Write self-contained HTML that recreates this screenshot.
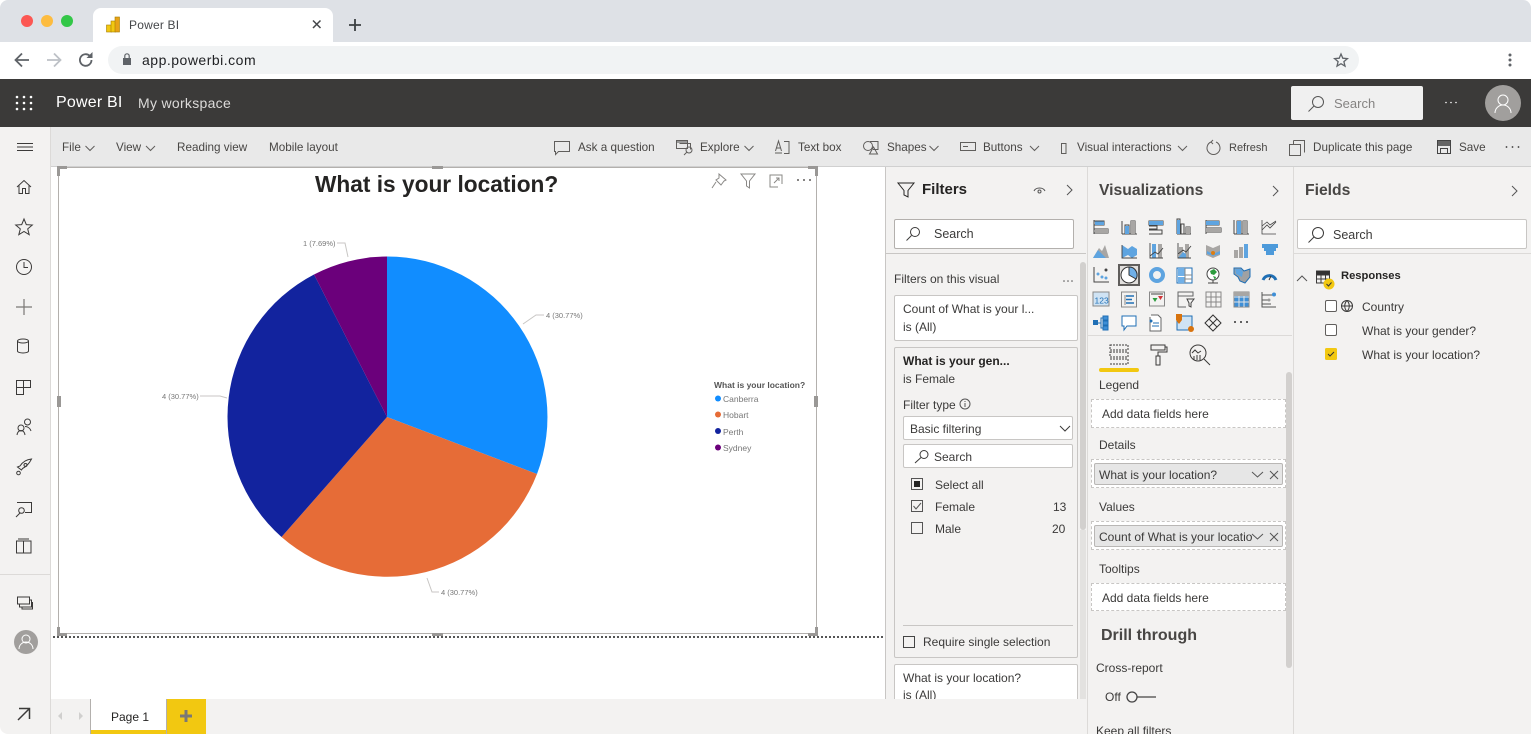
<!DOCTYPE html>
<html><head><meta charset="utf-8"><title>Power BI</title>
<style>
html,body{margin:0;padding:0;width:1531px;height:734px;overflow:hidden;background:#fff}
body{position:relative;font-family:"Liberation Sans",sans-serif;color:#333}
.b{position:absolute}
.t{position:absolute;white-space:nowrap;line-height:16px;font-size:12px;color:#3b3a39}
.r{font-size:11.7px;color:#484644}
svg.o{position:absolute;left:0;top:0}
.inp{position:absolute;background:#fff;border:1px solid #b3b0ad;border-radius:2px;box-sizing:border-box}
.dash{position:absolute;background:#fff;border:1px dashed #c8c6c4;box-sizing:border-box}
.pill{position:absolute;background:#e6e6e6;border:1px solid #b9b7b5;border-radius:2px;box-sizing:border-box}
</style></head><body>
<!-- browser chrome -->
<div class="b" style="left:0;top:0;width:1531px;height:42px;background:#dee1e6;border-radius:8px 8px 0 0"></div>
<div class="b" style="left:93px;top:8px;width:240px;height:34px;background:#fff;border-radius:8px 8px 0 0"></div>
<div class="b" style="left:0;top:42px;width:1531px;height:37px;background:#fff"></div>
<div class="b" style="left:108px;top:46px;width:1251px;height:28px;background:#f1f3f4;border-radius:14px"></div>
<div class="t" style="left:129px;top:17px;color:#45474a;letter-spacing:.2px">Power BI</div>
<div class="t" style="left:142px;top:52px;font-size:14px;color:#202124;letter-spacing:.5px">app.powerbi.com</div>
<!-- header -->
<div class="b" style="left:0;top:79px;width:1531px;height:48px;background:#3b3a39"></div>
<div class="t" style="left:56px;top:95px;font-size:16px;color:#fff;letter-spacing:.2px">Power BI</div>
<div class="t" style="left:138px;top:95px;font-size:14px;color:#dcdbda;letter-spacing:.3px">My workspace</div>
<div class="b" style="left:1291px;top:86px;width:132px;height:34px;background:#f0f0f0;border-radius:2px"></div>
<div class="t" style="left:1334px;top:96px;font-size:13px;color:#858382">Search</div>
<div class="b" style="left:1485px;top:85px;width:36px;height:36px;background:#a19f9d;border-radius:50%"></div>
<!-- app -->
<div class="b" style="left:0;top:127px;width:51px;height:607px;background:#f3f2f1;border-right:1px solid #dcdad8;box-sizing:border-box;border-radius:0 0 0 8px"></div>
<div class="b" style="left:51px;top:127px;width:1480px;height:40px;background:#e9e9e9;border-bottom:1px solid #d0d0d0;box-sizing:border-box"></div>
<div class="b" style="left:0;top:574px;width:50px;height:1px;background:#dcdad8"></div>
<div class="t r" style="left:62px;top:140px">File</div>
<div class="t r" style="left:116px;top:140px">View</div>
<div class="t r" style="left:177px;top:140px">Reading view</div>
<div class="t r" style="left:269px;top:140px">Mobile layout</div>
<div class="t r" style="left:578px;top:140px">Ask a question</div>
<div class="t r" style="left:700px;top:140px">Explore</div>
<div class="t r" style="left:798px;top:140px">Text box</div>
<div class="t r" style="left:887px;top:140px">Shapes</div>
<div class="t r" style="left:983px;top:140px">Buttons</div>
<div class="t r" style="left:1077px;top:140px">Visual interactions</div>
<div class="t r" style="left:1229px;top:140px;font-size:11px">Refresh</div>
<div class="t r" style="left:1313px;top:140px">Duplicate this page</div>
<div class="t r" style="left:1459px;top:140px">Save</div>
<!-- visual -->
<div class="b" style="left:58px;top:167px;width:759px;height:467px;border:1px solid #b3b0ad;box-sizing:border-box"></div>
<div class="b" style="left:53px;top:636px;width:831px;height:2px;background:repeating-linear-gradient(90deg,#555 0 2px,transparent 2px 4px)"></div>
<div class="t" style="left:315px;top:170px;font-size:22.7px;line-height:28px;font-weight:bold;color:#252423">What is your location?</div>
<div class="t" style="left:303px;top:236px;font-size:7.5px;color:#777">1 (7.69%)</div>
<div class="t" style="left:546px;top:308px;font-size:7.5px;color:#777">4 (30.77%)</div>
<div class="t" style="left:162px;top:389px;font-size:7.5px;color:#777">4 (30.77%)</div>
<div class="t" style="left:441px;top:585px;font-size:7.5px;color:#777">4 (30.77%)</div>
<div class="t" style="left:714px;top:377px;font-size:8.5px;font-weight:bold;color:#555">What is your location?</div>
<div class="t" style="left:723px;top:391px;font-size:8.5px;color:#777">Canberra</div>
<div class="t" style="left:723px;top:407px;font-size:8.5px;color:#777">Hobart</div>
<div class="t" style="left:723px;top:424px;font-size:8.5px;color:#777">Perth</div>
<div class="t" style="left:723px;top:440px;font-size:8.5px;color:#777">Sydney</div>
<!-- filters pane -->
<div class="b" style="left:885px;top:167px;width:202px;height:567px;background:#f3f2f1;border-left:1px solid #c8c6c4;box-sizing:border-box"></div>
<div class="t" style="left:922px;top:181px;font-size:15px;font-weight:bold;color:#252423;top:181px;line-height:17px">Filters</div>
<div class="inp" style="left:894px;top:219px;width:180px;height:30px"></div>
<div class="t" style="left:934px;top:226px;font-size:12.5px">Search</div>
<div class="b" style="left:886px;top:253px;width:200px;height:1px;background:#c8c6c4"></div>
<div class="t" style="left:894px;top:271px;font-size:12px">Filters on this visual</div>
<div class="inp" style="left:894px;top:295px;width:184px;height:46px;border-color:#c8c6c4"></div>
<div class="t" style="left:903px;top:301px">Count of What is your l...</div>
<div class="t" style="left:903px;top:319px">is (All)</div>
<div class="b" style="left:894px;top:347px;width:184px;height:311px;background:#f3f2f1;border:1px solid #c8c6c4;border-radius:2px;box-sizing:border-box"></div>
<div class="t" style="left:903px;top:353px;font-weight:bold;color:#252423">What is your gen...</div>
<div class="t" style="left:903px;top:371px">is Female</div>
<div class="t" style="left:903px;top:397px">Filter type</div>
<div class="inp" style="left:903px;top:416px;width:170px;height:24px;border-color:#c8c6c4"></div>
<div class="t" style="left:910px;top:421px">Basic filtering</div>
<div class="inp" style="left:903px;top:444px;width:170px;height:24px;border-color:#c8c6c4"></div>
<div class="t" style="left:934px;top:449px">Search</div>
<div class="t" style="left:935px;top:477px">Select all</div>
<div class="t" style="left:935px;top:499px">Female</div>
<div class="t" style="left:935px;top:521px">Male</div>
<div class="t" style="left:1053px;top:499px">13</div>
<div class="t" style="left:1052px;top:521px">20</div>
<div class="b" style="left:903px;top:625px;width:170px;height:1px;background:#c8c6c4"></div>
<div class="t" style="left:923px;top:634px">Require single selection</div>
<div class="inp" style="left:894px;top:664px;width:184px;height:50px;border-color:#c8c6c4"></div>
<div class="t" style="left:903px;top:670px">What is your location?</div>
<div class="t" style="left:903px;top:687px">is (All)</div>
<div class="b" style="left:1080px;top:262px;width:6px;height:268px;background:#d2d0ce;border-radius:3px"></div>
<div class="b" style="left:1080px;top:530px;width:6px;height:169px;background:#e3e2e0"></div>
<!-- page bottom tabs -->
<div class="b" style="left:51px;top:699px;width:1036px;height:35px;background:#f3f2f1"></div>
<div class="b" style="left:90px;top:699px;width:77px;height:35px;background:#fff;border-left:1px solid #b3b0ad;border-right:1px solid #b3b0ad;box-sizing:border-box"></div>
<div class="b" style="left:91px;top:730px;width:75px;height:4px;background:#f2c811"></div>
<div class="b" style="left:167px;top:699px;width:39px;height:35px;background:#f2c811"></div>
<div class="t" style="left:111px;top:709px;color:#252423;font-size:12px">Page 1</div>
<!-- viz pane -->
<div class="b" style="left:1087px;top:167px;width:206px;height:567px;background:#f3f2f1;border-left:1px solid #dcdad8;box-sizing:border-box"></div>
<div class="t" style="left:1099px;top:183px;font-size:15.7px;font-weight:bold;color:#484644;top:183px">Visualizations</div>
<div class="b" style="left:1088px;top:335px;width:204px;height:1px;background:#dcdad8"></div>
<div class="b" style="left:1099px;top:368px;width:40px;height:4px;background:#f2c811;border-radius:2px"></div>
<div class="b" style="left:1286px;top:372px;width:6px;height:296px;background:#d2d0ce;border-radius:3px"></div>
<div class="t" style="left:1099px;top:377px">Legend</div>
<div class="dash" style="left:1091px;top:399px;width:195px;height:29px"></div>
<div class="t" style="left:1102px;top:406px">Add data fields here</div>
<div class="t" style="left:1099px;top:437px">Details</div>
<div class="dash" style="left:1091px;top:459px;width:195px;height:29px"></div>
<div class="pill" style="left:1094px;top:463px;width:189px;height:22px"></div>
<div class="t" style="left:1099px;top:467px">What is your location?</div>
<div class="t" style="left:1099px;top:499px">Values</div>
<div class="dash" style="left:1091px;top:521px;width:195px;height:29px"></div>
<div class="pill" style="left:1094px;top:525px;width:189px;height:22px"></div>
<div class="t" style="left:1099px;top:529px;width:153px;overflow:hidden">Count of What is your location</div>
<div class="t" style="left:1099px;top:561px">Tooltips</div>
<div class="dash" style="left:1091px;top:583px;width:195px;height:28px"></div>
<div class="t" style="left:1102px;top:590px">Add data fields here</div>
<div class="t" style="left:1101px;top:627px;font-size:16px;line-height:18px;font-weight:bold;color:#484644">Drill through</div>
<div class="t" style="left:1096px;top:660px">Cross-report</div>
<div class="t" style="left:1105px;top:689px">Off</div>
<div class="t" style="left:1096px;top:723px">Keep all filters</div>
<!-- fields pane -->
<div class="b" style="left:1293px;top:167px;width:238px;height:567px;background:#f3f2f1;border-left:1px solid #dcdad8;box-sizing:border-box"></div>
<div class="t" style="left:1305px;top:183px;font-size:15.7px;font-weight:bold;color:#484644">Fields</div>
<div class="inp" style="left:1297px;top:219px;width:230px;height:30px;border-color:#c8c6c4"></div>
<div class="t" style="left:1333px;top:227px;font-size:12.5px">Search</div>
<div class="b" style="left:1294px;top:253px;width:237px;height:1px;background:#dcdad8"></div>
<div class="t" style="left:1341px;top:268px;font-weight:bold;font-size:11.2px;color:#252423">Responses</div>
<div class="t" style="left:1362px;top:299px">Country</div>
<div class="t" style="left:1362px;top:323px">What is your gender?</div>
<div class="t" style="left:1362px;top:347px">What is your location?</div>

<svg class="o" width="1531" height="734" viewBox="0 0 1531 734" fill="none" stroke="#3b3a39" stroke-width="1">
<!-- traffic lights -->
<g stroke="none"><circle cx="27" cy="21" r="6" fill="#fc5753"/><circle cx="47" cy="21" r="6" fill="#fdbc40"/><circle cx="67" cy="21" r="6" fill="#33c748"/></g>
<!-- PBI logo -->
<g stroke="#a67c00" stroke-width=".6"><rect x="106.500" y="25" width="5" height="7" fill="#f2c811"/><rect x="111" y="21" width="4.500" height="11" fill="#f2c811"/><rect x="115" y="17" width="4.500" height="15" fill="#e8a317"/></g>
<path d="M313 20.500l7.500 7.500M320.500 20.500l-7.500 7.500" stroke="#45474a" stroke-width="1.500"/>
<path d="M349 25h12M355 19v12" stroke="#3c4043" stroke-width="1.800"/>
<!-- nav -->
<path d="M29 60H16M22 53.500l-6.500 6.500 6.500 6.500" stroke="#5f6368" stroke-width="1.800"/>
<path d="M47 60h13M54 53.500l6.500 6.500-6.500 6.500" stroke="#bdc1c6" stroke-width="1.800"/>
<path d="M91.500 60a5.800 5.800 0 1 1-1.700-4.100" stroke="#5f6368" stroke-width="1.800"/><path d="M92.500 52v6h-6z" fill="#5f6368" stroke="none"/>
<path d="M123 58h8v7h-8z" fill="#5f6368" stroke="none"/><path d="M124.800 58v-2a2.200 2.200 0 0 1 4.400 0v2" stroke="#5f6368" stroke-width="1.200"/>
<path d="M1341 54l1.800 4.200 4.600.4-3.500 3 1.100 4.500-4-2.400-4 2.400 1.100-4.500-3.500-3 4.600-.4z" stroke="#5f6368" stroke-width="1.300"/>
<g fill="#5f6368" stroke="none"><circle cx="1510" cy="55" r="1.500"/><circle cx="1510" cy="60" r="1.500"/><circle cx="1510" cy="65" r="1.500"/></g>
<!-- waffle -->
<g fill="#fff" stroke="none"><circle cx="17" cy="97" r="1.300"/><circle cx="24" cy="97" r="1.300"/><circle cx="31" cy="97" r="1.300"/><circle cx="17" cy="103" r="1.300"/><circle cx="24" cy="103" r="1.300"/><circle cx="31" cy="103" r="1.300"/><circle cx="17" cy="109" r="1.300"/><circle cx="24" cy="109" r="1.300"/><circle cx="31" cy="109" r="1.300"/>
<circle cx="1446" cy="102.500" r=".8"/><circle cx="1451" cy="102.500" r=".8"/><circle cx="1456" cy="102.500" r=".8"/></g>
<circle cx="1318" cy="102" r="5.500" stroke="#555"/><path d="M1314 106l-5.500 5.500" stroke="#555"/>
<circle cx="1503" cy="100" r="5" stroke="#fff"/><path d="M1495 113a8 8 0 0 1 16 0" stroke="#fff"/>
<!-- left nav -->
<path d="M17 143.500h16M17 147h16M17 150.500h16" stroke-width="1"/>
<path d="M17 187l7-6.500 7 6.500M19 185.500v8h3.500v-5h3v5h3.500v-8"/>
<path d="M24 219l2.300 5.600 6 .4-4.600 3.900 1.500 5.800-5.200-3.200-5.200 3.200 1.500-5.800-4.600-3.900 6-.4z"/>
<circle cx="24" cy="267" r="7.500"/><path d="M24 262v5.500h4"/>
<path d="M16 307h16M24 299v16" stroke="#7a7876" stroke-width="1.200"/>
<ellipse cx="23" cy="341" rx="5.500" ry="2"/><path d="M17.500 341v10c0 1.200 2.500 2 5.500 2s5.500-.8 5.500-2v-10"/>
<path d="M16.500 387.500v-7h7v7zM23.500 380.500h7v7h-7zM16.500 387.500h7v7h-7z" stroke-width="1"/>
<circle cx="21" cy="428" r="3"/><circle cx="27.500" cy="422" r="3"/><path d="M17 435c.5-3 2-4.500 4-4.500s3.500 1.500 4 4.500M25 426.500c2.500 0 5 1.500 6 4.500"/>
<path d="M31.500 459c-5 .5-9 3-11.500 7l-2.500 1 4 3 1-1.500c4-2 7-5.500 9-9.500z"/><circle cx="25.500" cy="465" r="1.500"/><circle cx="18.500" cy="473" r="1.800"/>
<path d="M17 502.500h14.500v10H25M16 517l4-4"/><circle cx="21.500" cy="510.500" r="2.800"/>
<path d="M16.500 541h7v12h-7zM23.500 541h7.500v12h-7.500zM18 539h11" />
<path d="M17.500 597h12v7h-12zM19.500 604v3h12v-7h-2M22 607v2h10.500v-7" />
<circle cx="26" cy="642" r="12" fill="#a19f9d" stroke="none"/><circle cx="26" cy="639" r="4" stroke="#fff"/><path d="M19 649a7 7 0 0 1 14 0" stroke="#fff"/>
<path d="M18 720l11-11M19 708.500h10.500V719" stroke-width="1.500"/>
<!-- ribbon chevrons -->
<g stroke="#605e5c"><path d="M85.500 146l4.500 4.500 4.500-4.500M146 146l4.500 4.500 4.500-4.500M744.500 146l4.500 4.500 4.500-4.500M929.500 146l4.500 4.500 4.500-4.500M1030 146l4.500 4.500 4.500-4.500M1178 146l4.500 4.500 4.500-4.500"/></g>
<!-- ribbon icons -->
<g stroke="#605e5c">
<path d="M554.500 141.500h15v10h-11l-3 3v-3h-1z"/>
<path d="M676.500 140.500h11v8h-11zM679.500 143.500h11v6" /><rect x="677" y="141" width="10" height="2" fill="#999" stroke="none"/><circle cx="689" cy="150" r="3"/><path d="M687 152l-3 3"/>
<path d="M775.500 151l3-10 3 10M776.500 148h4.500M775 153h7M784 141.500h5v12h-5"/>
<circle cx="868" cy="146" r="4.500"/><path d="M870 141.500h8v8h-5M873.500 147l4 7h-8z"/>
<path d="M960.500 142.500h15v8h-15zM963 146.500h5"/>
<path d="M1061.500 143.500h4.500v10h-4.500z"/>
<path d="M1211 142a6.500 6.500 0 1 0 5 0M1213 140l-2 2 2 2"/>
<path d="M1293.500 140.500h11v12M1289.500 144.500h11v11h-11zM1293.500 144.500v-4"/>
<path d="M1437.500 140.500h13v13h-13z" stroke="#444"/><rect x="1438" y="141" width="12" height="5" fill="#666" stroke="none"/><path d="M1440.500 153.500v-5h7v5" stroke="#444"/>
</g>
<g fill="#3b3a39" stroke="none"><circle cx="1506.500" cy="147" r=".9"/><circle cx="1512.500" cy="147" r=".9"/><circle cx="1518.500" cy="147" r=".9"/></g>
<!-- handles -->
<g fill="#9a9896" stroke="none">
<path d="M57 166h10v3h-7v7h-3zM808 166h10v10h-3v-7h-7zM57 627h3v6h7v3H57zM815 627h3v9h-10v-3h7z"/>
<rect x="432" y="166" width="11" height="3"/><rect x="432" y="633" width="11" height="3"/><rect x="57" y="396" width="4" height="11"/><rect x="814" y="396" width="4" height="11"/></g>
<!-- visual header icons -->
<path d="M719 174l7 6-2 1-3 4-5-5 3-2zM716 182l-4 6" stroke="#8a8886"/>
<path d="M741 174h14l-5.500 7v7l-3-2v-5z" stroke="#8a8886"/>
<path d="M775 175h7v9M770 179v8h8M774 183l5-5M776 178h3v3M770 179v-4h5" stroke="#8a8886"/>
<g fill="#605e5c" stroke="none"><circle cx="798" cy="180" r="1"/><circle cx="804" cy="180" r="1"/><circle cx="810" cy="180" r="1"/></g>
<!-- pie -->
<g stroke="none">
<path d="M387 417V256.500A160.500 160.500 0 0 1 537 474z" fill="#118dff"/>
<path d="M387 417L537 474A160.500 160.500 0 0 1 281.500 537z" fill="#e66c37"/>
<path d="M387 417L281.500 537A160.500 160.500 0 0 1 314 274.500z" fill="#12239e"/>
<path d="M387 417L314 274.500A160.500 160.500 0 0 1 387 256.500z" fill="#6b007b"/>
</g>
<g stroke="#c8c6c4"><path d="M337 243h8l3 14M544 315h-8l-13 9M200 396h20l7 2M439 592h-7l-5-14"/></g>
<g stroke="none"><circle cx="718" cy="398.500" r="3" fill="#118dff"/><circle cx="718" cy="414.500" r="3" fill="#e66c37"/><circle cx="718" cy="431" r="3" fill="#12239e"/><circle cx="718" cy="447.500" r="3" fill="#6b007b"/></g>
<!-- tabs -->
<path d="M62 712l-4 4 4 4zM79 712l4 4-4 4z" fill="#d0cfce" stroke="none"/>
<path d="M186 710v12M180 716h12" stroke="#7a7876" stroke-width="3"/>
<!-- filters pane icons -->
<path d="M898 183h16l-6 7.500V197l-4-2v-4.500z" stroke="#252423"/>
<path d="M1034 191c2-4 9-4 11 0" stroke="#555"/><circle cx="1039.500" cy="191.500" r="1.500" stroke="#555"/>
<path d="M1067 185l5 5-5 5" stroke="#555"/>
<circle cx="915" cy="232" r="4.500"/><path d="M911.500 235.500l-5 5"/>
<g fill="#555" stroke="none"><circle cx="1064" cy="281" r=".8"/><circle cx="1068" cy="281" r=".8"/><circle cx="1072" cy="281" r=".8"/></g>
<circle cx="965" cy="404" r="5" stroke="#555"/><path d="M965 403v4M965 401v1" stroke="#555"/>
<path d="M1060 426l5 5 5-5"/>
<circle cx="924" cy="454.500" r="4"/><path d="M921 457.500l-6 5.500"/>
<rect x="911.500" y="478.500" width="11" height="11" stroke="#555"/><rect x="914" y="481" width="6" height="6" fill="#252423" stroke="none"/>
<rect x="911.500" y="500.500" width="11" height="11" stroke="#555"/><path d="M913.500 506l2.500 3 5-6" stroke="#555"/>
<rect x="911.500" y="522.500" width="11" height="11" stroke="#555"/>
<rect x="903.500" y="636.500" width="11" height="11" stroke="#444"/>
<!-- pane chevrons -->
<path d="M1273 186l5 5-5 5M1512 186l5 5-5 5" stroke="#555"/>
<!-- viz icons row 1 -->
<g stroke="#444">
<path d="M1094 220v14M1094 221h10v4h-10M1094 229h14v4h-14"/>
<path d="M1122 234V221M1122 234h15M1125 234v-9h4v9M1131 234v-13h4v13"/>
<path d="M1149 221h14v4h-14zM1149 226h8v3h-8M1149 230h13v4h-13"/>
<path d="M1177 234v-15h3v15M1181 234v-10h3v10M1186 234v-7h4v7M1177 234h14"/>
<path d="M1206 220v14M1206 221h13v4h-13M1206 228h15v4h-15"/>
<path d="M1234 234V220M1234 234h15M1237 234v-13h4v13M1243 234v-13h4v13"/>
<path d="M1262 220v14h14M1262 230l5-5 3 3 6-6M1262 226l5-4 3 3 6-4" stroke-width=".8"/>
</g>
<g fill="#5ea4e0" stroke="none"><rect x="1095" y="221.500" width="9" height="3.500"/><rect x="1125" y="226" width="4" height="8"/><rect x="1149" y="221" width="14" height="4"/><rect x="1177" y="220" width="3" height="14"/><rect x="1206" y="221" width="13" height="4"/><rect x="1237" y="221" width="4" height="13"/></g>
<g fill="#a8a6a4" stroke="none"><rect x="1095" y="229" width="13" height="4"/><rect x="1131" y="221" width="4" height="13"/><rect x="1186" y="227" width="4" height="7"/><rect x="1206" y="228" width="15" height="4"/><rect x="1243" y="221" width="4" height="13"/></g>
<!-- row 2 -->
<g stroke="none"><path d="M1093 258l6-10 3 3 3-6 4 13z" fill="#a8a6a4"/><path d="M1093 258l5-8 4 4 4 4z" fill="#5ea4e0"/>
<path d="M1122 245l6 4 4-3 5 3v6l-5 3-4-3-6 3z" fill="#5ea4e0"/>
<rect x="1152" y="244" width="4" height="14" fill="#5ea4e0"/><rect x="1158" y="244" width="4" height="14" fill="#a8a6a4"/>
<rect x="1179" y="247" width="4" height="11" fill="#a8a6a4"/><rect x="1185" y="244" width="4" height="14" fill="#a8a6a4"/><path d="M1178 258l5-6 3 2v4z" fill="#5ea4e0"/>
<path d="M1206 245l7 3 7-3v10l-7 3-7-3z" fill="#a8a6a4"/><path d="M1207 251l6 3 7-3v3l-7 2-6-2z" fill="#5ea4e0"/><circle cx="1213" cy="253" r="2" fill="#dc7d13"/>
<rect x="1234" y="250" width="4" height="8" fill="#a8a6a4"/><rect x="1239" y="247" width="4" height="11" fill="#a8a6a4"/><rect x="1244" y="244" width="4" height="14" fill="#5ea4e0"/>
<path d="M1262 244h16v4h-2v3h-2v4h-8v-4h-2v-3h-2z" fill="#4d9ada"/></g>
<g stroke="#444"><path d="M1122 245v13h15M1150 243v15h13M1150 256l5-4 3 2 5-6M1178 243v15h13M1178 254l5-4 3 2 5-6" stroke-width=".9"/></g>
<!-- row 3 -->
<path d="M1094 267v15h15" stroke="#444"/>
<g stroke="none"><circle cx="1098" cy="274" r="1.500" fill="#5ea4e0"/><circle cx="1102" cy="277" r="1.500" fill="#5ea4e0"/><circle cx="1106" cy="270" r="1.500" fill="#444"/><circle cx="1106" cy="278" r="1.500" fill="#5ea4e0"/></g>
<rect x="1119" y="265" width="20" height="20" fill="#e1dfdd" stroke="#605e5c" stroke-width="2"/>
<circle cx="1129" cy="275" r="8" fill="#fff" stroke="#333"/><path d="M1129 267a8 8 0 0 1 7 12l-7-4z" fill="#70b0e8" stroke="#333"/>
<circle cx="1157" cy="275" r="6" stroke="#5ea4e0" stroke-width="4"/>
<rect x="1177" y="268" width="15" height="15" stroke="#1f6fb5" fill="#fff"/><path d="M1178 268h7v8h-7zM1178 277h7v6h-7z" fill="#70b0e8" stroke="none"/><path d="M1185 268v15M1185 275h7M1185 279h7" stroke="#888"/>
<circle cx="1213" cy="274" r="6" stroke="#444" fill="#fff"/><path d="M1210 271l4-2 3 3-3 3-3-1zM1213 276l3 1-1 3z" fill="#2c9c3d" stroke="none"/><path d="M1208 283h10M1213 280v3" stroke="#444"/>
<path d="M1234 268h7l3 3 6-2 0 8-5 6-5-2-2-4-4-3z" fill="#9fa1a3" stroke="#1f6fb5"/><path d="M1235 269h6l2 3-1 5-6-3z" fill="#5ea4e0" stroke="none"/>
<path d="M1263 280a7 7 0 0 1 13 0" stroke="#1f6fb5" stroke-width="3"/><path d="M1269 280l2-4" stroke="#333"/>
<!-- row 4 -->
<rect x="1093" y="292" width="16" height="14" fill="#cfe3f4" stroke="#888"/>
<text x="1094.500" y="303.500" font-size="8.500" fill="#1f6fb5" stroke="none" font-family="Liberation Sans">123</text>
<rect x="1121.500" y="292" width="15" height="15" stroke="#888"/><path d="M1125 295v10" stroke="#888"/><path d="M1126 296h8M1126 299.500h6M1126 303h8" stroke="#1f6fb5" stroke-width="1.500"/>
<rect x="1149.500" y="292" width="15" height="14" stroke="#888"/><path d="M1151 294h12" stroke="#444"/><path d="M1155 302l-2.500-4h5z" fill="#2c9c3d" stroke="none"/><path d="M1158 296h5l-2.500 4z" fill="#d13438" stroke="none"/>
<path d="M1178 292h15v4h-15zM1178 296v11h8" stroke="#666"/><path d="M1187 299h7l-3 4v4l-2-1v-3z" stroke="#444"/>
<path d="M1206 292h15v15h-15zM1206 297h15M1206 302h15M1211 292v15M1216 292v15" stroke="#888"/>
<rect x="1234" y="292" width="15" height="15" fill="#3f8fd6" stroke="#888"/><path d="M1234 297h15M1234 302h15M1239 292v15M1244 292v15" stroke="#e5e5e5"/><rect x="1234" y="292" width="15" height="4" fill="#a8a6a4" stroke="none"/>
<path d="M1262 292v15h14M1262 295h12M1262 300h6M1262 304h9" stroke="#555"/><circle cx="1274" cy="294.500" r="2" fill="#3f8fd6" stroke="none"/><circle cx="1269" cy="300" r="1.500" fill="#999" stroke="none"/>
<!-- row 5 -->
<path d="M1097 323h4M1101 323v-5h3M1101 323v5h3" stroke="#1f6fb5"/><rect x="1093" y="320" width="5" height="5" fill="#1f6fb5" stroke="none"/><path d="M1103 316h5v4h-5zM1103 321h5v4h-5zM1103 326h5v4h-5z" fill="#3f8fd6" stroke="#1f6fb5"/>
<path d="M1122 316h14v10h-9l-3 4v-4h-2z" stroke="#1f6fb5" fill="#fff"/>
<path d="M1151 315h7l3 3v13h-11v-14" stroke="#666" fill="#fff"/><circle cx="1151" cy="321" r="1.500" fill="#1f6fb5" stroke="none"/><path d="M1153 323h6M1152 326h7" stroke="#1f6fb5"/>
<rect x="1177" y="316" width="15" height="14" stroke="#1f6fb5" fill="#cfe3f4"/><path d="M1176 314h6v6l-3 4-3-4z" fill="#d8730e" stroke="none"/><circle cx="1191" cy="329" r="3" fill="#d8730e" stroke="none"/>
<path d="M1213 315l8 8-8 8-8-8zM1209 319l8 8M1217 319l-8 8" stroke="#333"/>
<g fill="#333" stroke="none"><circle cx="1235" cy="322" r="1"/><circle cx="1241" cy="322" r="1"/><circle cx="1247" cy="322" r="1"/></g>
<!-- tabs under viz -->
<path d="M1110 345h18v5h-18zM1110 352h18v5h-18zM1110 359h18v5h-18" stroke-dasharray="2 1"/>
<path d="M1151 345h14v5h-14zM1165 347h2v5h-9v4M1156 356h4v9h-4z"/>
<circle cx="1198" cy="353" r="8"/><path d="M1204 359l6 6M1192 353l3-3 3 3 3-2M1194 356v4M1197 355v5M1200 355v5"/>
<!-- pill icons -->
<path d="M1252 472l5.500 5 5.500-5M1270 471l8 8M1278 471l-8 8M1252 534l5.500 5 5.500-5M1270 533l8 8M1278 533l-8 8" stroke="#555"/>
<!-- toggle -->
<circle cx="1132" cy="697" r="5" stroke="#444" stroke-width="1.300"/><path d="M1137 697h19" stroke="#444" stroke-width="1.300"/>
<!-- fields icons -->
<circle cx="1318" cy="233" r="5.500"/><path d="M1314 237l-5.500 5.500"/>
<path d="M1297 281l5-5 5 5" stroke="#555"/>
<path d="M1316.500 271h13v12h-13zM1316.500 275h13M1316.500 279h13M1321 271v12M1325.500 271v12"/>
<rect x="1316.500" y="271" width="13" height="3.500" fill="#333" stroke="none"/>
<circle cx="1329" cy="284" r="5.500" fill="#f2c811" stroke="none"/><path d="M1326.500 284l2 2 3-3.500" stroke="#333"/>
<rect x="1325.500" y="300.500" width="11" height="11" rx="1.500" fill="#fff" stroke="#605e5c"/>
<rect x="1325.500" y="324.500" width="11" height="11" rx="1.500" fill="#fff" stroke="#605e5c"/>
<rect x="1325" y="348" width="12" height="12" rx="1.500" fill="#f2c811" stroke="none"/><path d="M1328 354l2 2 4-4" stroke="#333"/>
<circle cx="1347" cy="306" r="5.500"/><path d="M1341.500 306h11M1347 300.500c-3 3-3 8 0 11M1347 300.500c3 3 3 8 0 11"/>
</svg>
</body></html>
